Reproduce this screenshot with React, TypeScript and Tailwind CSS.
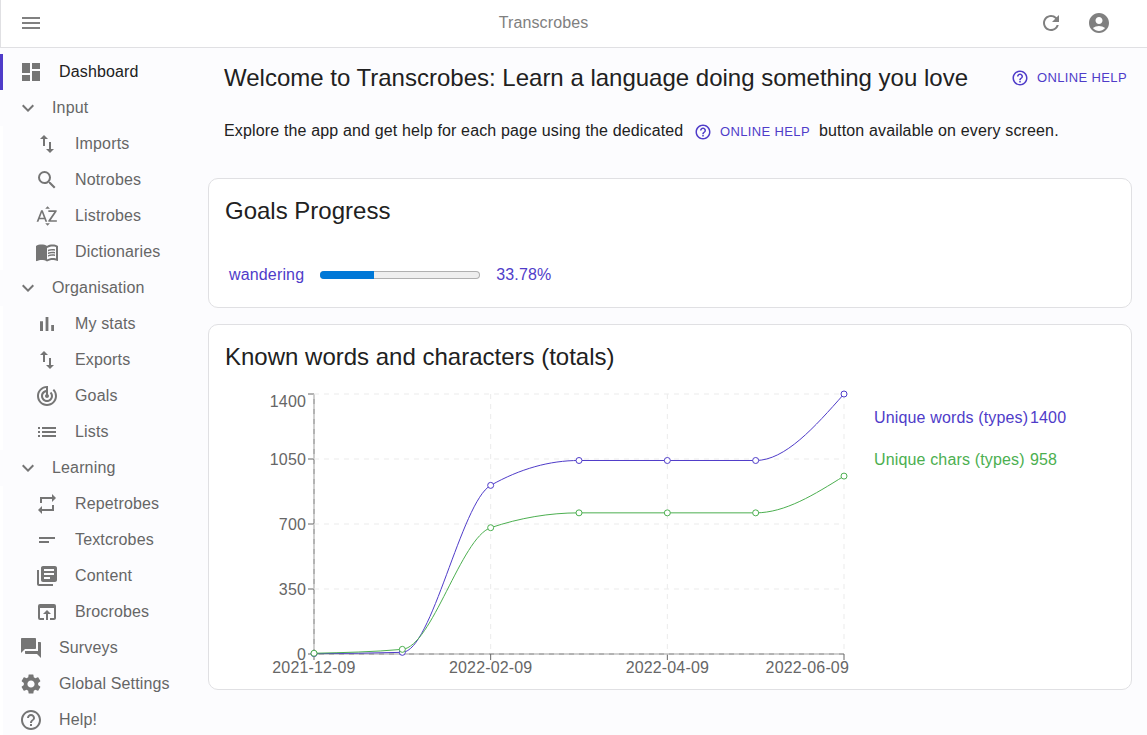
import type { ComponentType } from "react";
import {
  MdAccountCircle,
  MdDashboard,
  MdExpandMore,
  MdHelpOutline,
  MdImportExport,
  MdLibraryBooks,
  MdList,
  MdMenu,
  MdMenuBook,
  MdOpenInBrowser,
  MdQuestionAnswer,
  MdRefresh,
  MdRepeat,
  MdSearch,
  MdSettings,
  MdShortText,
  MdSortByAlpha,
  MdTrackChanges,
} from "react-icons/md";

type Item = { label: string; icon: ComponentType<{ className?: string }> };

function BarsIcon({ className }: { className?: string }) {
  return (
    <svg viewBox="0 0 24 24" fill="currentColor" className={className}>
      <path d="M5 9.2h3V19H5V9.2zM10.6 5h2.8v14h-2.8V5zm5.6 8H19v6h-2.8v-6z" />
    </svg>
  );
}

function NavItem({ label, icon: Icon, nested, active }: Item & { nested?: boolean; active?: boolean }) {
  return (
    <a
      className={`flex h-9 items-center gap-4 border-l-[3px] ${nested ? "pl-8" : "pl-4"} ${
        active ? "border-[#4f3cc9] text-[#212121]" : "border-white text-[#666666]"
      }`}
    >
      <Icon className="size-6 shrink-0 text-[#757575]" />
      <span>{label}</span>
    </a>
  );
}

function NavGroup({ label, items }: { label: string; items: Item[] }) {
  return (
    <div>
      <div className="flex h-9 items-center gap-3 pl-4 text-[#666666]">
        <MdExpandMore className="size-6 shrink-0 text-[#757575]" />
        <span>{label}</span>
      </div>
      {items.map((item) => (
        <NavItem key={item.label} {...item} nested />
      ))}
    </div>
  );
}

function HelpButton() {
  return (
    <button className="flex items-center gap-2 text-[13px] leading-[22px] tracking-[0.02857em] text-[#4f3cc9]">
      <MdHelpOutline className="size-[18px]" />
      ONLINE HELP
    </button>
  );
}

type Point = [number, number];

const LEFT = 89;
const RIGHT = 619;
const TOP = 5;
const BOTTOM = 265;
const MAX = 1400;

const toPoints = (values: number[]): Point[] =>
  values.map((v, i) => [
    LEFT + ((RIGHT - LEFT) * i) / (values.length - 1),
    BOTTOM - ((BOTTOM - TOP) * v) / MAX,
  ]);

/* Monotone cubic interpolation through the points. */
function monotonePath(p: Point[]): string {
  const n = p.length;
  const s = p.slice(1).map((q, i) => (q[1] - p[i][1]) / (q[0] - p[i][0]));
  const m: number[] = new Array(n).fill(0);
  for (let i = 1; i < n - 1; i++) {
    const a = s[i - 1];
    const b = s[i];
    m[i] = (Math.sign(a) + Math.sign(b)) * Math.min(Math.abs(a), Math.abs(b), Math.abs(a + b) / 4) || 0;
  }
  m[0] = (3 * s[0] - m[1]) / 2;
  m[n - 1] = (3 * s[n - 2] - m[n - 2]) / 2;
  let d = `M${p[0][0]},${p[0][1]}`;
  for (let i = 1; i < n; i++) {
    const dx = (p[i][0] - p[i - 1][0]) / 3;
    d += `C${p[i - 1][0] + dx},${p[i - 1][1] + dx * m[i - 1]},${p[i][0] - dx},${p[i][1] - dx * m[i]},${p[i][0]},${p[i][1]}`;
  }
  return d;
}

const series = [
  { color: "#4f3cc9", points: toPoints([2, 9, 908, 1042, 1042, 1042, 1400]) },
  { color: "#4caf50", points: toPoints([4, 25, 680, 760, 760, 760, 958]) },
];

const yTicks = [
  { label: "0", y: 265, text: 265 },
  { label: "350", y: 200, text: 200 },
  { label: "700", y: 135, text: 135 },
  { label: "1050", y: 70, text: 70 },
  { label: "1400", y: 5, text: 12 },
];

const xTicks = [
  { label: "2021-12-09", x: 89, text: 89 },
  { label: "2022-02-09", x: 265.667, text: 265.667 },
  { label: "2022-04-09", x: 442.333, text: 442.333 },
  { label: "2022-06-09", x: 619, text: 582.3 },
];

function WordsChart() {
  return (
    <svg width="634" height="300" viewBox="0 0 634 300" className="shrink-0">
      <g stroke="#666666">
        <line x1={LEFT} y1={BOTTOM} x2={RIGHT} y2={BOTTOM} />
        <line x1={LEFT} y1={TOP} x2={LEFT} y2={BOTTOM} />
        {xTicks.map((t) => (
          <line key={t.label} x1={t.x} y1={BOTTOM} x2={t.x} y2={BOTTOM + 6} />
        ))}
        {yTicks.map((t) => (
          <line key={t.label} x1={LEFT - 6} y1={t.y} x2={LEFT} y2={t.y} />
        ))}
      </g>
      <g fill="#666666" fontSize="16">
        {xTicks.map((t) => (
          <text key={t.label} x={t.text} y={284} textAnchor="middle">
            {t.label}
          </text>
        ))}
        {yTicks.map((t) => (
          <text key={t.label} x={LEFT - 8} y={t.text + 5.7} textAnchor="end">
            {t.label}
          </text>
        ))}
      </g>
      <g stroke="#ebebeb" strokeDasharray="5 5">
        {yTicks.map((t) => (
          <line key={t.label} x1={LEFT} y1={t.y} x2={RIGHT} y2={t.y} />
        ))}
        {xTicks.map((t) => (
          <line key={t.label} x1={t.x} y1={TOP} x2={t.x} y2={BOTTOM} />
        ))}
      </g>
      {series.map((s) => (
        <g key={s.color} stroke={s.color}>
          <path d={monotonePath(s.points)} fill="none" />
          {s.points.map(([x, y]) => (
            <circle key={x} cx={x} cy={y} r="3" fill="#ffffff" />
          ))}
        </g>
      ))}
    </svg>
  );
}

export default function App() {
  return (
    <div className="flex h-[735px] w-[1147px] flex-col overflow-hidden bg-[#fcfcfe] font-['Liberation_Sans',Arial,sans-serif] text-base tracking-[0.00938em] text-[#212121]">
      <header className="flex h-12 shrink-0 items-center border-b border-l border-[#e0e0e3] bg-white pr-9 pb-px pl-[18px] text-[#808080]">
        <MdMenu className="size-6" />
        <h1 className="flex-1 pl-[5px] text-center leading-6 tracking-[0.0075em]">Transcrobes</h1>
        <div className="flex gap-6">
          <MdRefresh className="size-6" />
          <MdAccountCircle className="size-6" />
        </div>
      </header>

      <div className="flex min-h-0 flex-1">
        <nav className="w-[208px] shrink-0 pt-1.5 leading-6">
          <NavItem label="Dashboard" icon={MdDashboard} active />
          <NavGroup
            label="Input"
            items={[
              { label: "Imports", icon: MdImportExport },
              { label: "Notrobes", icon: MdSearch },
              { label: "Listrobes", icon: MdSortByAlpha },
              { label: "Dictionaries", icon: MdMenuBook },
            ]}
          />
          <NavGroup
            label="Organisation"
            items={[
              { label: "My stats", icon: BarsIcon },
              { label: "Exports", icon: MdImportExport },
              { label: "Goals", icon: MdTrackChanges },
              { label: "Lists", icon: MdList },
            ]}
          />
          <NavGroup
            label="Learning"
            items={[
              { label: "Repetrobes", icon: MdRepeat },
              { label: "Textcrobes", icon: MdShortText },
              { label: "Content", icon: MdLibraryBooks },
              { label: "Brocrobes", icon: MdOpenInBrowser },
            ]}
          />
          <NavItem label="Surveys" icon={MdQuestionAnswer} />
          <NavItem label="Global Settings" icon={MdSettings} />
          <NavItem label="Help!" icon={MdHelpOutline} />
        </nav>

        <main className="w-[924px] shrink-0">
          <div className="flex items-center justify-between pt-[14px] pr-[5px] pl-4">
            <h2 className="text-2xl leading-8 tracking-normal">
              Welcome to Transcrobes: Learn a language doing something you love
            </h2>
            <HelpButton />
          </div>
          <p className="flex items-center pt-[25px] pl-4 leading-6">
            Explore the app and get help for each page using the dedicated
            <span className="pt-0.5 pr-[9px] pl-[10.5px]">
              <HelpButton />
            </span>
            button available on every screen.
          </p>

          <section className="mt-[35px] h-[130px] rounded-[10px] border border-[#e0e0e3] bg-white p-4">
            <h2 className="text-2xl leading-8 tracking-normal">Goals Progress</h2>
            <div className="flex items-center gap-4 pt-9 pl-1 leading-6 text-[#4f3cc9]">
              <span>wandering</span>
              <div className="h-2 w-40 overflow-hidden rounded-full bg-[#b0b0b0]">
                <div className="flex h-full">
                  <div className="w-[54px] bg-[#0078d7]" />
                  <div className="my-px mr-px flex-1 rounded-r-full bg-[#efefef]" />
                </div>
              </div>
              <span>33.78%</span>
            </div>
          </section>

          <section className="mt-4 h-[366px] rounded-[10px] border border-[#e0e0e3] bg-white p-4">
            <h2 className="text-2xl leading-8 tracking-normal">Known words and characters (totals)</h2>
            <div className="flex pt-4">
              <WordsChart />
              <dl className="grid h-fit grid-cols-[156px_auto] gap-y-[18px] pt-[17px] pl-[15px] leading-6">
                <dt className="whitespace-nowrap text-[#4f3cc9]">Unique words (types)</dt>
                <dd className="text-[#4f3cc9]">1400</dd>
                <dt className="whitespace-nowrap text-[#4caf50]">Unique chars (types)</dt>
                <dd className="text-[#4caf50]">958</dd>
              </dl>
            </div>
          </section>
        </main>
      </div>
    </div>
  );
}
